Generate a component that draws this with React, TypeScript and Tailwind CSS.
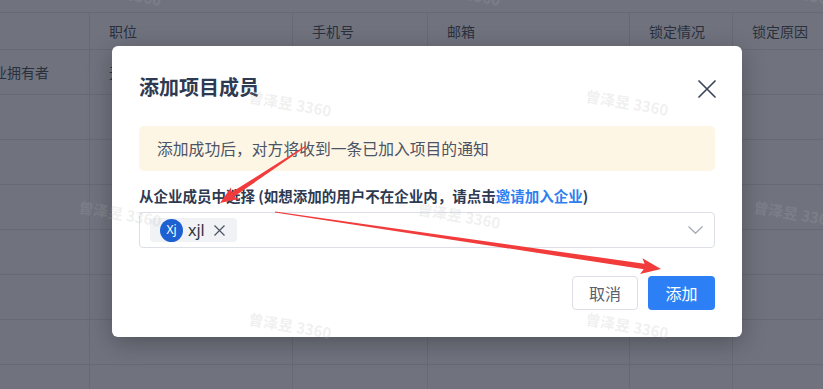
import React from "react";

// 背景表格的列头
const headers = ["", "职位", "手机号", "邮箱", "锁定情况", "锁定原因"];

// 水印位置（整页覆盖）
const marks = [
  "left-[120px] top-[-7px]",
  "left-[459px] top-[-7px]",
  "left-[795px] top-[-7px]",
  "left-[290px] top-[104px]",
  "left-[627px] top-[103px]",
  "left-[120px] top-[214px]",
  "left-[459px] top-[216px]",
  "left-[795px] top-[214px]",
  "left-[290px] top-[326px]",
  "left-[627px] top-[326px]",
];

type Pt = [number, number];

// 由粗到细的标注箭头
const arrowPoints = (from: Pt, to: Pt, headLen: number, headW: number, tailW: number, shaftW: number) => {
  const [x1, y1] = from;
  const [x2, y2] = to;
  const len = Math.hypot(x2 - x1, y2 - y1);
  const dx = (x2 - x1) / len;
  const dy = (y2 - y1) / len;
  const nx = -dy;
  const ny = dx;
  const bx = x2 - dx * headLen;
  const by = y2 - dy * headLen;
  const nb = x2 - dx * (headLen - 3);
  const nby = y2 - dy * (headLen - 3);
  const p = (x: number, y: number) => `${x.toFixed(1)},${y.toFixed(1)}`;
  return [
    p(x1 + (nx * tailW) / 2, y1 + (ny * tailW) / 2),
    p(nb + (nx * shaftW) / 2, nby + (ny * shaftW) / 2),
    p(bx + (nx * headW) / 2, by + (ny * headW) / 2),
    p(x2, y2),
    p(bx - (nx * headW) / 2, by - (ny * headW) / 2),
    p(nb - (nx * shaftW) / 2, nby - (ny * shaftW) / 2),
    p(x1 - (nx * tailW) / 2, y1 - (ny * tailW) / 2),
  ].join(" ");
};

function Row({ cells, header }: { cells: string[]; header?: boolean }) {
  return (
    <div className={`grid grid-cols-[89px_203px_135px_202px_103px_1fr] border-t border-[#676a75] ${header ? "h-[37px]" : "h-[45px]"}`}>
      {cells.map((c, i) => (
        <div key={i} className={`flex items-center whitespace-nowrap overflow-hidden text-[14px] text-[#2b303d] ${i > 0 ? "border-l border-[#676a75] pl-[19px]" : ""}`}>
          {i === 0 && c ? <span className="-ml-[21px]">{c}</span> : c}
        </div>
      ))}
    </div>
  );
}

export default function App() {
  return (
    <div className="relative w-[823px] h-[389px] overflow-hidden bg-[#70737e] font-['Noto_Sans_CJK_SC','Noto_Sans',sans-serif]">
      {/* 背景表格 */}
      <div className="h-[12px]" />
      <Row header cells={headers} />
      <Row cells={["企业拥有者", "无", "", "", "", ""]} />
      {Array.from({ length: 7 }).map((_, i) => (
        <Row key={i} cells={["", "", "", "", "", ""]} />
      ))}

      {/* 弹窗 */}
      <div className="absolute left-[112px] top-[46px] w-[630px] bg-white rounded-[6px] shadow-[0_6px_24px_rgba(0,0,0,0.28)] px-[27px] pt-[27px] pb-[27px]">
        <div className="flex items-center justify-between h-[28px]">
          <h3 className="text-[20px] font-bold text-[#2e3a52] leading-[28px]">添加项目成员</h3>
          <svg width="18" height="18" viewBox="0 0 18 18" className="mr-[-1px] mt-[4px]">
            <path d="M1 1L17 17M17 1L1 17" stroke="#3c465b" strokeWidth="1.7" strokeLinecap="round" />
          </svg>
        </div>

        <div className="mt-[25px] h-[45px] rounded-[5px] bg-[#fdf6e4] flex items-center pl-[18px] text-[15.8px] text-[#4b5366]">
          添加成功后，对方将收到一条已加入项目的通知
        </div>

        <div className="mt-[14px] h-[22px] leading-[22px] text-[14.5px] font-bold text-[#2e3a52]">
          从企业成员中选择 (如想添加的用户不在企业内，请点击<span className="text-[#2f7ff1]">邀请加入企业</span>)
        </div>

        <div className="mt-[5px] h-[36px] rounded-[4px] border border-[#dcdfe6] flex items-center justify-between pl-[10px] pr-[11px]">
          <div className="h-[24px] rounded-[4px] bg-[#f0f2f5] flex items-center pl-[10px] pr-[12px]">
            <div className="w-[23px] h-[23px] rounded-full bg-[#1c60d2] flex items-center justify-center text-white text-[12px] font-['Noto_Sans',sans-serif]">
              Xj
            </div>
            <span className="ml-[5px] text-[16px] text-[#2f3440] font-['Noto_Sans',sans-serif] leading-[20px]">xjl</span>
            <svg width="11" height="11" viewBox="0 0 11 11" className="ml-[9px]">
              <path d="M0.5 0.5L10.5 10.5M10.5 0.5L0.5 10.5" stroke="#4b5263" strokeWidth="1.2" />
            </svg>
          </div>
          <svg width="15" height="8" viewBox="0 0 15 8">
            <path d="M0.5 0.5L7.5 7.3L14.5 0.5" fill="none" stroke="#a3a7b1" strokeWidth="1.2" />
          </svg>
        </div>

        <div className="mt-[28px] flex justify-end gap-[10px]">
          <button className="w-[66px] h-[34px] rounded-[4px] border border-[#dcdfe6] bg-white text-[16px] text-[#59616f]">取消</button>
          <button className="w-[67px] h-[34px] rounded-[4px] bg-[#2d7ff5] text-[16px] text-white">添加</button>
        </div>
      </div>

      {/* 标注箭头 */}
      <svg className="absolute left-0 top-0 pointer-events-none" width="823" height="389">
        <polygon points={arrowPoints([306, 146], [220, 203], 18, 14, 1.2, 5)} fill="#f23b3b" />
        <polygon points={arrowPoints([275, 212], [661, 269], 20, 16, 1.2, 5.5)} fill="#f23b3b" />
      </svg>

      {/* 水印 */}
      {marks.map((m, i) => (
        <span
          key={i}
          className={`absolute ${m} -translate-x-1/2 -translate-y-1/2 rotate-[10deg] whitespace-nowrap text-[15px] font-bold text-[rgba(175,175,175,0.2)] pointer-events-none select-none`}
        >
          曾泽昱 3360
        </span>
      ))}
    </div>
  );
}
